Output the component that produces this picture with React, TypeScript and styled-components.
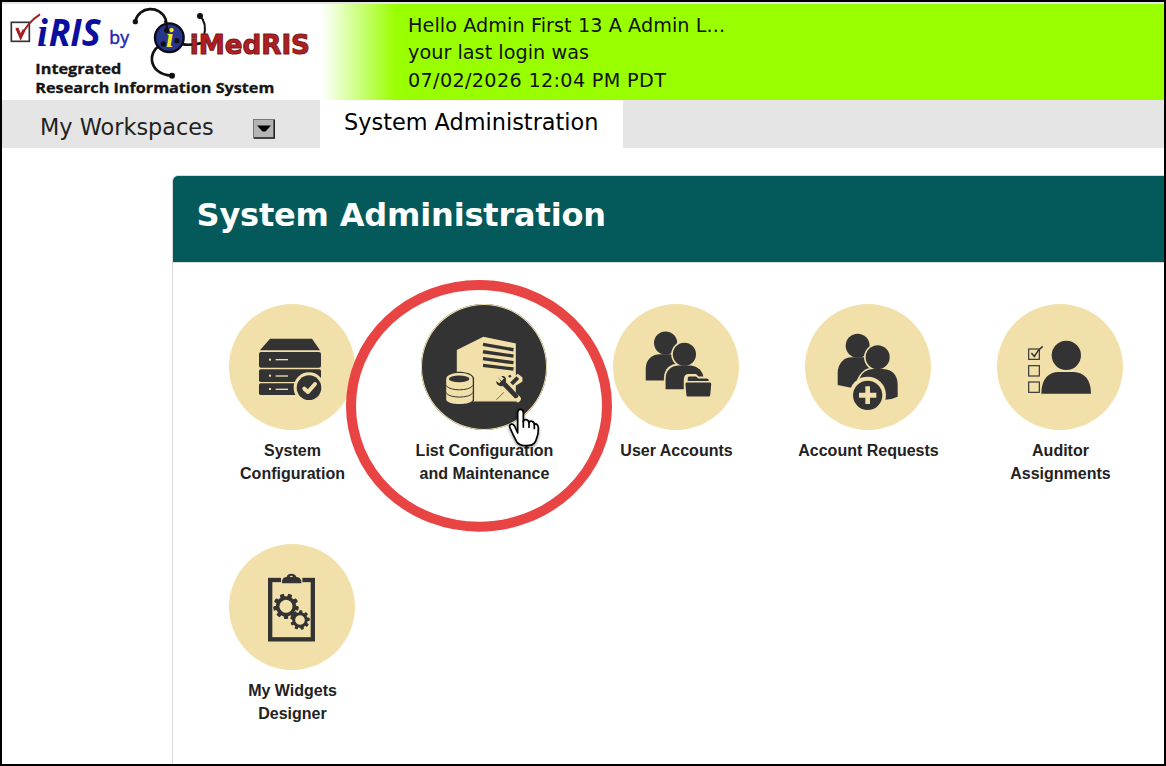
import React from "react";
import styled, { createGlobalStyle } from "styled-components";

const INK = "#333333";
const SAND = "#f2e0ab";

const GlobalStyle = createGlobalStyle`
  * { box-sizing: border-box; }
  body { margin: 0; background: #fff; }
`;

const Frame = styled.div`
  position: relative;
  width: 1166px;
  height: 766px;
  border: 2px solid #000;
  overflow: hidden;
  background: #fff;
  display: flex;
  flex-direction: column;
  font-family: "DejaVu Sans", Verdana, sans-serif;
`;

const Header = styled.header`
  flex: none;
  height: 98px;
  border-top: 2px solid #e5e5e5;
  display: flex;
`;

const LogoBox = styled.div`
  width: 318px;
  height: 96px;
  svg { display: block; }
`;

const Greeting = styled.div`
  flex: 1;
  padding: 8px 0 0 88px;
  background: linear-gradient(to right, #fff 0, #f6ffea 8px, #9cff05 74px, #99ff00 84px);
`;

const GreetingLine = styled.div<{ $spacing: number }>`
  height: 27.3px;
  line-height: 27.3px;
  font-size: 19.2px;
  letter-spacing: ${(p) => p.$spacing}px;
  color: #111;
  white-space: nowrap;
`;

const TabBar = styled.nav`
  flex: none;
  height: 48px;
  display: flex;
  background: #e5e5e5;
  font-size: 22.4px;
  white-space: nowrap;
`;

const WorkspacesTab = styled.div`
  width: 318px;
  padding: 6px 45px 0 38px;
  display: flex;
  align-items: center;
  justify-content: space-between;
  color: #222;
  svg { position: relative; top: 2px; }
`;

const ActiveTab = styled.div`
  width: 303px;
  padding-left: 24px;
  line-height: 45px;
  background: #fff;
  color: #000;
`;

const Panel = styled.section`
  flex: 1;
  margin: 27px 0 0 170px;
  border: 1px solid #d9d9d9;
  border-width: 1px 0 0 1px;
  border-top-left-radius: 6px;
  overflow: hidden;
`;

const PanelTitle = styled.h1`
  margin: 0;
  height: 87px;
  padding-left: 23.5px;
  border-bottom: 1px solid #d9d9d9;
  background: #045a5a;
  color: #fff;
  font-size: 32px;
  letter-spacing: -0.17px;
  line-height: 79px;
  font-weight: bold;
`;

const Grid = styled.div`
  display: grid;
  grid-template-columns: repeat(5, 192px);
  grid-auto-rows: 240px;
  padding: 41px 0 0 23px;
`;

const Tile = styled.div`
  display: flex;
  flex-direction: column;
  align-items: center;
`;

const Disc = styled.div<{ $active?: boolean }>`
  width: 126px;
  height: 126px;
  border-radius: 50%;
  background: ${(p) => (p.$active ? INK : SAND)};
  box-shadow: ${(p) => (p.$active ? `inset 0 0 0 1px ${SAND}` : "none")};
  svg { display: block; width: 100%; height: 100%; }
`;

const Label = styled.div`
  margin-top: 9px;
  padding-left: 1px;
  font: bold 16px/23px "Liberation Sans", Arial, sans-serif;
  color: #222;
  text-align: center;
  white-space: pre-line;
`;

const Annotation = styled.svg`
  position: absolute;
  left: 338px;
  top: 273px;
  width: 280px;
  height: 260px;
`;

const Logo = () => (
  <svg width="318" height="96" viewBox="6 12 954 288">
    <rect x="34" y="67" width="54" height="57" fill="#fff" stroke="#333" strokeWidth="5" />
    <path d="M49 84 L62 111 Q82 67 120 43" fill="none" stroke="#a82020" strokeWidth="6" />
    <path d="M51 84 L62 111 L72 90" fill="none" stroke="#a82020" strokeWidth="9" />
    <g fill="#0a0fa0" fontWeight="bold" fontStyle="italic">
      <text transform="translate(111 137)" fontFamily="Liberation Serif, serif" fontSize="118">i</text>
      <text transform="translate(146 137) scale(.93 1)" fontFamily="Open Sans, sans-serif" fontSize="115">RIS</text>
    </g>
    <text x="328" y="131" fontFamily="Open Sans, sans-serif" fontSize="53" fill="#2228b0" stroke="#2228b0" strokeWidth="1.5">by</text>
    <g fill="none" stroke="#111" strokeWidth="8" strokeLinecap="round">
      <path d="M406 64 C416 18 480 14 497 58 Q502 74 500 92" />
      <path d="M600 48 C615 62 618 82 612 108" strokeWidth="6" />
      <path d="M490 132 C440 148 442 222 514 227" />
      <path d="M530 124 Q552 141 600 130" />
    </g>
    <circle cx="508" cy="113" r="43" fill="#27358b" stroke="#0b0b18" strokeWidth="7" />
    <path d="M494 62 Q503 76 500 92" fill="none" stroke="#111" strokeWidth="7" />
    <g fill="#111">
      <circle cx="406" cy="65" r="8" />
      <circle cx="600" cy="48" r="9" />
      <circle cx="516" cy="227" r="9" />
      <circle cx="500" cy="91" r="8" />
      <circle cx="490" cy="132" r="8" />
      <circle cx="531" cy="122" r="8" />
    </g>
    <text x="498" y="141" fontFamily="Liberation Serif, serif" fontWeight="bold" fontStyle="italic" fontSize="82" fill="#f6ec20">i</text>
    <text x="569" y="163" fontFamily="DejaVu Sans, sans-serif" fontWeight="bold" fontSize="77" fill="#b11f24" stroke="#7a1818" strokeWidth="3" textLength="361" lengthAdjust="spacingAndGlyphs">iMedRIS</text>
    <g fill="#151515" stroke="#151515" strokeWidth="1" fontFamily="Open Sans, sans-serif" fontWeight="bold" fontSize="45">
      <text x="106" y="222" textLength="258" lengthAdjust="spacingAndGlyphs">Integrated</text>
      <text x="106" y="280" textLength="717" lengthAdjust="spacingAndGlyphs">Research Information System</text>
    </g>
  </svg>
);

const DropButton = () => (
  <svg width="22" height="20" viewBox="0 0 22 20">
    <rect x="0.5" y="0.5" width="21" height="18.5" fill="#b5b5b5" stroke="#777" />
    <path d="M1 19 H21.2 V1" fill="none" stroke="#222" strokeWidth="1.6" />
    <path d="M4 6.5 H18 L12.5 12.5 H9.5 Z" fill="#000" />
  </svg>
);

const ServerIcon = () => (
  <svg viewBox="12 26 378 378" fill={INK}>
    <path d="M135 130 H261 L285 165 H105 Z" />
    <rect x="102" y="170" width="186" height="47" rx="6" />
    <rect x="102" y="222" width="186" height="38" rx="5" />
    <rect x="102" y="264" width="150" height="35" rx="5" />
    <g fill={SAND}>
      <rect x="132" y="190" width="6" height="6" />
      <rect x="152" y="191" width="37" height="4" />
      <rect x="132" y="238" width="6" height="6" />
      <rect x="152" y="240" width="37" height="4" />
      <rect x="132" y="278" width="6" height="6" />
      <rect x="152" y="280" width="37" height="4" />
      <circle cx="252" cy="277" r="46" />
    </g>
    <circle cx="252" cy="277" r="37" />
    <path d="M238 280 L249 290 L270 266" fill="none" stroke={SAND} strokeWidth="12" strokeLinecap="round" strokeLinejoin="round" />
  </svg>
);

const ListIcon = () => (
  <svg viewBox="244 84 378 380" fill={SAND}>
    <path d="M351 223 L431 183 L529 203 V377 H351 Z" />
    <g stroke={INK} strokeWidth="10">
      <path d="M430 206 L522 222" />
      <path d="M430 228 L522 241" />
      <path d="M430 249 L522 261" />
      <path d="M430 269 L522 280" />
    </g>
    <path d="M314 308 C316 282 398 282 403 308 V378 H314 Z" fill={INK} />
    <path d="M319 310 C320 286 398 286 399 310 V373 C396 390 322 390 319 373 Z" />
    <ellipse cx="358" cy="310" rx="31" ry="10" fill={INK} />
    <g fill="none" stroke={INK} strokeWidth="3">
      <path d="M319 330 C328 347 390 347 399 330" />
      <path d="M319 352 C328 369 390 369 399 352" />
    </g>
    <path d="M518 308 L535 294 L549 306 L549 318 L530 330 Z" />
    <path d="M510 346 L534 370" stroke={SAND} strokeWidth="20" strokeLinecap="round" />
    <path d="M475 304 L486 316 L493 309 L485 302 C498 299 501 309 499 320 L537 359 Q537 369 526 368 L490 331 C478 334 469 327 470 316 L479 323 L484 318 Z" fill={INK} />
    <path d="M516 325 L535 306" stroke={INK} strokeWidth="12" />
    <path d="M470 373 L493 350" stroke={INK} strokeWidth="2" />
    <circle cx="511" cy="302" r="4" fill={INK} />
    <path d="M400 378 H532" stroke="#8d8569" strokeWidth="3" />
  </svg>
);

const AccountsIcon = () => (
  <svg viewBox="9 27 381 381" fill={INK}>
    <circle cx="168" cy="145" r="35" />
    <path d="M108 258 V223 C108 192 130 179 151 179 H185 C205 182 216 195 216 220 V258 Z" />
    <circle cx="225" cy="179" r="40" fill={SAND} />
    <path d="M163 290 V251 C164 222 183 208 206 208 H250 L250 290 Z" fill={SAND} />
    <circle cx="225" cy="179" r="35" />
    <path d="M168 285 V253 C168 225 188 213 208 213 H244 C266 215 280 231 282 246 V285 Z" />
    <path d="M223 290 V255 Q224 239 238 239 H260 L268 246 H308 V310 H223 Z" fill={SAND} />
    <path d="M235 260 V250 Q236 246 241 246 H260 L267 252 H293 Q299 253 299 260 Z" />
    <path d="M232 264 H302 Q306 264 306 269 L303 302 Q303 307 298 307 H236 Q231 307 231 302 L228 269 Q228 264 232 264 Z" />
  </svg>
);

const RequestsIcon = () => (
  <svg viewBox="15 27 378 378" fill={INK}>
    <circle cx="173" cy="152" r="36" />
    <path d="M113 270 V235 C113 204 133 187 155 187 H195 L216 220 L190 250 L153 278 Z" />
    <circle cx="233" cy="187" r="41" fill={SAND} />
    <path d="M172 253 C180 232 196 218 220 218 H240 V270 H172 Z" fill={SAND} />
    <circle cx="233" cy="187" r="36" />
    <path d="M178 254 C184 233 200 223 220 222 H250 C276 223 293 241 293 267 V305 Q275 314 255 314 L220 255 Z" />
    <circle cx="203" cy="300" r="55" fill={SAND} />
    <circle cx="203" cy="301" r="44" />
    <path d="M196 274 H210 V293 H229 V308 H210 V327 H196 V308 H177 V293 H196 Z" fill={SAND} />
  </svg>
);

const AuditorIcon = () => (
  <svg viewBox="21 27 378 378" fill={INK}>
    <circle cx="229" cy="181" r="44" />
    <path d="M154 296 C154 252 176 231 206 231 H251 C282 232 303 253 303 296 Z" />
    <g fill="none" stroke={INK} strokeWidth="3.5">
      <rect x="116" y="162" width="32" height="31" />
      <rect x="116" y="212" width="32" height="31" />
      <rect x="116" y="261" width="32" height="31" />
      <path d="M124 174 L133 184 Q143 165 158 154" strokeWidth="4.5" />
    </g>
  </svg>
);

interface GearProps { cx: number; cy: number; r: number; teeth: number; width: number; tooth: number; start: number }

const Gear = ({ cx, cy, r, teeth, width, tooth, start }: GearProps) => (
  <g transform={`translate(${cx} ${cy}) rotate(${start})`} fill={INK}>
    <circle r={r} fill="none" stroke={INK} strokeWidth={width} />
    {Array.from({ length: teeth }, (_, i) => (
      <rect
        key={i}
        x={-tooth / 2}
        y={-r - width / 2 - tooth * 0.6}
        width={tooth}
        height={tooth}
        rx="3"
        transform={`rotate(${(i * 360) / teeth})`}
      />
    ))}
  </g>
);

const WidgetsIcon = () => (
  <svg viewBox="12 12 378 378">
    <rect x="135.5" y="120" width="128" height="178" fill="none" stroke={INK} strokeWidth="13" />
    <path d="M168 110 H232 V132 H168 Z" fill={SAND} />
    <path d="M171 130 V122 Q173 112 185 111 C187 98 211 98 214 111 Q226 112 229 122 V130 Z" fill={INK} />
    <ellipse cx="199" cy="109" rx="5" ry="2" fill={SAND} />
    <Gear cx={183} cy={199} r={25} teeth={9} width={11} tooth={13} start={20} />
    <Gear cx={225} cy={240} r={19} teeth={9} width={9} tooth={10} start={5} />
  </svg>
);

const tiles = [
  { label: "System\nConfiguration", icon: <ServerIcon /> },
  { label: "List Configuration\nand Maintenance", icon: <ListIcon />, active: true },
  { label: "User Accounts", icon: <AccountsIcon /> },
  { label: "Account Requests", icon: <RequestsIcon /> },
  { label: "Auditor\nAssignments", icon: <AuditorIcon /> },
  { label: "My Widgets\nDesigner", icon: <WidgetsIcon /> },
];

export default function App() {
  return (
    <>
      <GlobalStyle />
      <Frame>
        <Header>
          <LogoBox><Logo /></LogoBox>
          <Greeting>
            <GreetingLine $spacing={0.08}>Hello Admin First 13 A Admin L...</GreetingLine>
            <GreetingLine $spacing={0.04}>your last login was</GreetingLine>
            <GreetingLine $spacing={0.34}>07/02/2026 12:04 PM PDT</GreetingLine>
          </Greeting>
        </Header>
        <TabBar>
          <WorkspacesTab>My Workspaces<DropButton /></WorkspacesTab>
          <ActiveTab>System Administration</ActiveTab>
        </TabBar>
        <Panel>
          <PanelTitle>System Administration</PanelTitle>
          <Grid>
            {tiles.map((t) => (
              <Tile key={t.label}>
                <Disc $active={t.active}>{t.icon}</Disc>
                <Label>{t.label}</Label>
              </Tile>
            ))}
          </Grid>
        </Panel>
        <Annotation viewBox="0 0 840 780">
          <ellipse cx="417" cy="392.5" rx="384" ry="362.5" fill="none" stroke="#e94444" strokeWidth="30" />
          <g style={{ filter: "drop-shadow(0 4px 4px rgba(0,0,0,.45))" }}>
            <path
              d="M533 474 V412 Q534 403 541 403 Q549 403 550 412 V440 Q551 433 558 434 Q566 435 567 443 Q570 437 576 439 Q583 441 583 449 Q587 445 591 449 Q595 453 595 460 C596 482 590 490 586 500 Q580 512 558 512 Q538 512 530 500 C522 485 515 470 509 456 Q508 448 515 447 Q521 447 525 456 Z"
              fill="#fff"
              stroke="#000"
              strokeWidth="5"
              strokeLinejoin="round"
            />
            <path d="M550 436 V458 M567 442 V459 M583 448 V463" stroke="#000" strokeWidth="5" fill="none" />
          </g>
        </Annotation>
      </Frame>
    </>
  );
}
